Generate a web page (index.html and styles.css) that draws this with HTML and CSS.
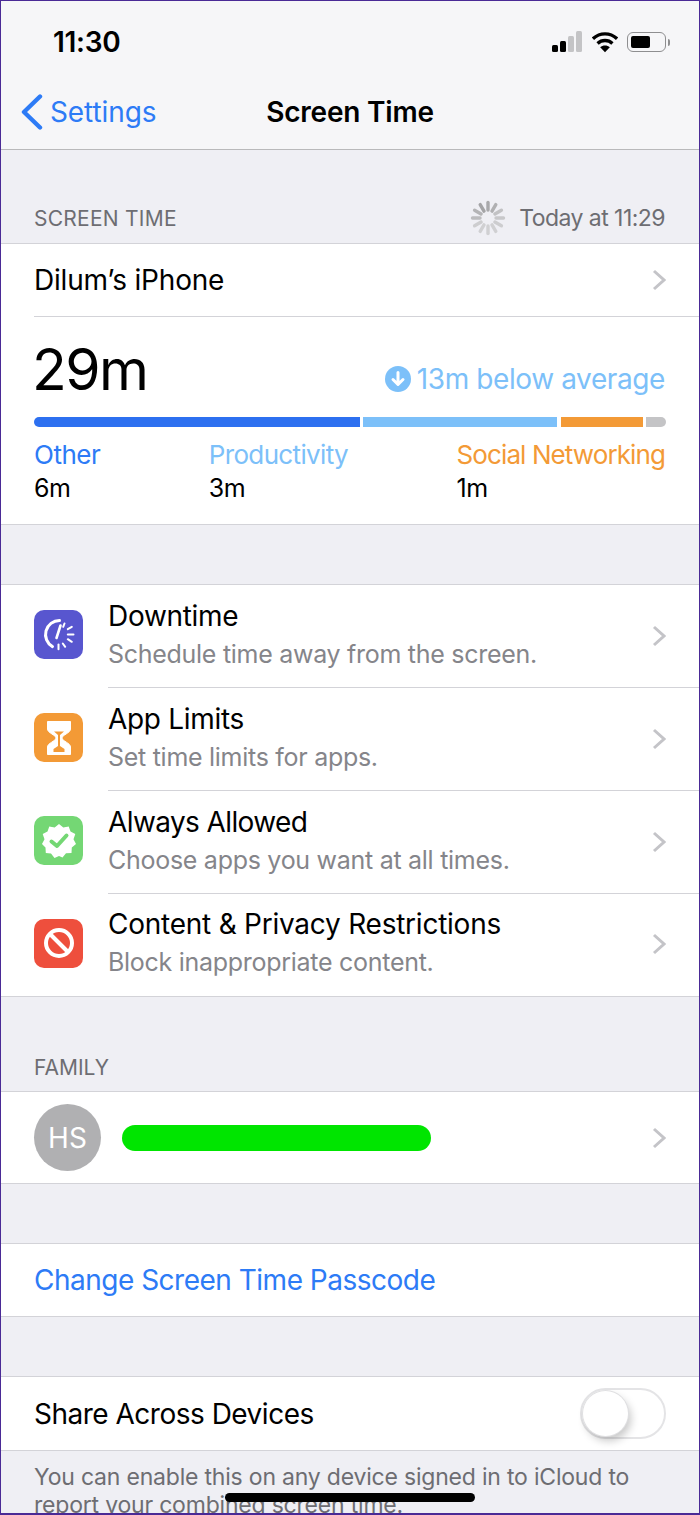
FILE: index.html
```html
<!DOCTYPE html>
<html lang="en">

<head>
    <meta charset="UTF-8">
    <meta name="viewport" content="width=device-width, initial-scale=1.0">
    <title>Screen Time</title>
    <link rel="stylesheet" href="styles.css">
</head>

<body>
    <div id="phone">
        <div id="topBar">
            <div class="statusBar">
                <span class="clock">11:30</span>
                <div class="statusIcons">
                    <svg width="33" height="24" viewBox="0 0 33 24">
                        <rect x="1" y="15" width="6" height="7" rx="1.5" fill="#000"/>
                        <rect x="9" y="11" width="6" height="11" rx="1.5" fill="#000"/>
                        <rect x="17" y="6" width="6" height="16" rx="1.5" fill="#c4c4c6"/>
                        <rect x="25" y="1" width="6" height="21" rx="1.5" fill="#c4c4c6"/>
                    </svg>
                    <svg width="26" height="21" viewBox="1 1.500 28 22">
                        <path d="M2 8.5C9.5 1.5 20.500 1.500 28 8.500" fill="none" stroke="#000" stroke-width="3.600"/>
                        <path d="M7 13.500C11.500 9.300 18.500 9.300 23 13.500" fill="none" stroke="#000" stroke-width="3.600"/>
                        <path d="M15 23L9.800 17.500C12.800 15 17.200 15 20.200 17.500Z" fill="#000"/>
                    </svg>
                    <div class="battery">
                        <div class="batteryBody"><div class="batteryLevel"></div></div>
                        <div class="batteryTip"></div>
                    </div>
                </div>
            </div>
            <div class="navBar">
                <div class="backLink">
                    <svg width="24" height="36" viewBox="0 0 24 36">
                        <path d="M20 2.500L4 18L20 33.500" fill="none" stroke="#2d7bf6" stroke-width="4.400" stroke-linecap="round" stroke-linejoin="round"/>
                    </svg>
                    <span>Settings</span>
                </div>
                <div class="navTitle">Screen Time</div>
            </div>
        </div>

        <div class="sectionHead firstHead">
            <span>SCREEN TIME</span>
            <div class="updated">
                <svg width="36" height="36" viewBox="0 0 36 36">
                    <g stroke-width="3.400" stroke-linecap="round" fill="none">
                        <path d="M18 2.500V10" stroke="#a9a9ab"/>
                        <path d="M25.800 4.600L22 11.100" stroke="#b0b0b2"/>
                        <path d="M31.400 10.200L24.900 14" stroke="#c2c2c4"/>
                        <path d="M33.500 18H26" stroke="#c8c8ca"/>
                        <path d="M31.400 25.800L24.900 22" stroke="#cdcdcf"/>
                        <path d="M25.800 31.400L22 24.900" stroke="#d0d0d2"/>
                        <path d="M18 33.500V26" stroke="#d0d0d2"/>
                        <path d="M10.200 31.400L14 24.900" stroke="#d0d0d2"/>
                        <path d="M4.600 25.800L11.100 22" stroke="#cdcdcf"/>
                        <path d="M2.500 18H10" stroke="#bcbcbe"/>
                        <path d="M4.600 10.200L11.100 14" stroke="#b4b4b6"/>
                        <path d="M10.200 4.600L14 11.100" stroke="#a4a4a6"/>
                    </g>
                </svg>
                <span>Today at 11:29</span>
            </div>
        </div>

        <div class="group">
            <div class="row deviceRow">
                <span class="rowTitle deviceName">Dilum’s iPhone</span>
                <svg class="chevron" width="14" height="22" viewBox="0 0 14 22"><path d="M2 2L12 11L2 20" fill="none" stroke="#c4c4c8" stroke-width="3"/></svg>
            </div>
            <div class="summary">
                <div class="totalLine">
                    <span class="total">29m</span>
                    <div class="average">
                        <svg width="26" height="26" viewBox="0 0 26 26">
                            <circle cx="13" cy="13" r="13" fill="#7cc0f9"/>
                            <path d="M13 6.500V18M8 13.500L13 18.500L18 13.500" fill="none" stroke="#fff" stroke-width="3" stroke-linecap="round" stroke-linejoin="round"/>
                        </svg>
                        <span>13m below average</span>
                    </div>
                </div>
                <div class="usageBar">
                    <div class="seg segOther"></div>
                    <div class="seg segProd"></div>
                    <div class="seg segSocial"></div>
                    <div class="seg segRest"></div>
                </div>
                <div class="legend">
                    <div class="legendItem"><span class="labelOther">Other</span><span class="legendTime">6m</span></div>
                    <div class="legendItem"><span class="labelProd">Productivity</span><span class="legendTime">3m</span></div>
                    <div class="legendItem"><span class="labelSocial">Social Networking</span><span class="legendTime">1m</span></div>
                </div>
            </div>
        </div>

        <div class="spacer"></div>

        <div class="group">
            <div class="featureRow">
                <div class="appIcon iconDowntime">
                    <svg width="34" height="34" viewBox="0 0 34 34">
                        <path d="M17.500 2.500A14 14 0 0 0 10.500 28.600" fill="none" stroke="#fff" stroke-width="3" stroke-linecap="round"/>
                        <path d="M18.500 7.500L14.500 20" stroke="#fff" stroke-width="2.600" stroke-linecap="round"/>
                        <g stroke="#fff" stroke-width="2" stroke-linecap="round">
                            <path d="M22.500 5.500L21.200 8.800"/>
                            <path d="M29.800 8.800L25.800 11.200"/>
                            <path d="M31.500 16.500H25.800"/>
                            <path d="M29.800 23.800L25.800 21.200"/>
                            <path d="M23.200 28.800L20.800 25.500"/>
                            <path d="M16.500 31.200V26.500"/>
                        </g>
                    </svg>
                </div>
                <div class="featureText"><span class="rowTitle">Downtime</span><span class="rowSub">Schedule time away from the screen.</span></div>
                <svg class="chevron" width="14" height="22" viewBox="0 0 14 22"><path d="M2 2L12 11L2 20" fill="none" stroke="#c4c4c8" stroke-width="3"/></svg>
            </div>
            <div class="featureRow">
                <div class="appIcon iconLimits">
                    <svg width="34" height="38" viewBox="0 0 34 38">
                        <path d="M5.500 2.500H28.500V10C28.500 14 20 16 20 19C20 22 28.500 24 28.500 28V35.500H5.500V28C5.500 24 14 22 14 19C14 16 5.500 14 5.500 10Z" fill="#fff" stroke="#fff" stroke-linejoin="round"/>
                        <path d="M12 12.500H22L18 16V27L22.500 30V33H11.500V30L16 27V16Z" fill="#f39a36"/>
                    </svg>
                </div>
                <div class="featureText"><span class="rowTitle">App Limits</span><span class="rowSub">Set time limits for apps.</span></div>
                <svg class="chevron" width="14" height="22" viewBox="0 0 14 22"><path d="M2 2L12 11L2 20" fill="none" stroke="#c4c4c8" stroke-width="3"/></svg>
            </div>
            <div class="featureRow">
                <div class="appIcon iconAllowed">
                    <svg width="36" height="36" viewBox="0 0 36 36">
                        <path d="M18 1L22.300 4.400L27.700 3.400L29.500 8.500L34.300 11L32.500 16.200L35 21L30.800 24.500L30.500 30L25 30.300L21.500 34.500L18 33L13.500 35L10 30.500L4.800 30L4.500 24.500L1 21L3.500 16.200L1.700 11L6.500 8.500L8.300 3.400L13.700 4.400Z" fill="#fff"/>
                        <path d="M10.500 18.500L16 23L25.500 12.500" fill="none" stroke="#74d774" stroke-width="4" stroke-linecap="round" stroke-linejoin="round"/>
                    </svg>
                </div>
                <div class="featureText"><span class="rowTitle titleAllowed">Always Allowed</span><span class="rowSub">Choose apps you want at all times.</span></div>
                <svg class="chevron" width="14" height="22" viewBox="0 0 14 22"><path d="M2 2L12 11L2 20" fill="none" stroke="#c4c4c8" stroke-width="3"/></svg>
            </div>
            <div class="featureRow">
                <div class="appIcon iconContent">
                    <svg width="32" height="32" viewBox="0 0 32 32">
                        <circle cx="16" cy="16" r="13" fill="none" stroke="#fff" stroke-width="4"/>
                        <path d="M7 7L25 25" stroke="#fff" stroke-width="4"/>
                    </svg>
                </div>
                <div class="featureText"><span class="rowTitle titleContent">Content &amp; Privacy Restrictions</span><span class="rowSub">Block inappropriate content.</span></div>
                <svg class="chevron" width="14" height="22" viewBox="0 0 14 22"><path d="M2 2L12 11L2 20" fill="none" stroke="#c4c4c8" stroke-width="3"/></svg>
            </div>
        </div>

        <div class="sectionHead familyHead"><span>FAMILY</span></div>

        <div class="group">
            <div class="row familyRow">
                <div class="avatar">HS</div>
                <div class="hiddenName"></div>
                <svg class="chevron" width="14" height="22" viewBox="0 0 14 22"><path d="M2 2L12 11L2 20" fill="none" stroke="#c4c4c8" stroke-width="3"/></svg>
            </div>
        </div>

        <div class="spacer"></div>

        <div class="group">
            <div class="row"><span class="rowTitle linkText">Change Screen Time Passcode</span></div>
        </div>

        <div class="spacer"></div>

        <div class="group">
            <div class="row shareRow">
                <span class="rowTitle shareText">Share Across Devices</span>
                <div class="toggle"><div class="knob"></div></div>
            </div>
        </div>

        <p class="footNote">You can enable this on any device signed in to iCloud to report your combined screen time.</p>

        <div class="homeBar"></div>
    </div>
</body>

</html>
```

FILE: styles.css
```css
html, body {
    margin: 0;
    padding: 0;
}

body {
    font-family: Inter, "Liberation Sans", sans-serif;
    color: #000;
    background: #efeff4;
}

#phone {
    position: relative;
    box-sizing: border-box;
    width: 700px;
    height: 1515px;
    overflow: hidden;
    border: 1px solid #4a2a96;
    border-bottom-width: 2px;
    background: #efeff4;
}

#topBar {
    height: 148px;
    background: #f6f6f8;
    border-bottom: 1px solid #b9b9bb;
}

.statusBar {
    display: flex;
    justify-content: space-between;
    align-items: center;
    box-sizing: border-box;
    height: 74px;
    padding: 8px 29px 0 52px;
}

.clock {
    font-size: 28px;
    font-weight: 600;
    letter-spacing: -0.3px;
}

.statusIcons {
    display: flex;
    align-items: center;
    gap: 8px;
}

.battery {
    display: flex;
    align-items: center;
    margin-left: 1px;
}

.batteryBody {
    box-sizing: border-box;
    width: 39px;
    height: 20px;
    padding: 3px;
    border: 1.500px solid #8e8e90;
    border-radius: 6px;
}

.batteryLevel {
    width: 19px;
    height: 100%;
    background: #000;
    border-radius: 2px;
}

.batteryTip {
    width: 2px;
    height: 7px;
    margin-left: 2px;
    background: #8e8e90;
    border-radius: 0 2px 2px 0;
}

.navBar {
    position: relative;
    display: flex;
    align-items: center;
    justify-content: center;
    height: 74px;
}

.backLink {
    position: absolute;
    left: 19px;
    top: 0;
    bottom: 0;
    display: flex;
    align-items: center;
    gap: 6px;
    color: #2d7bf6;
    font-size: 28px;
    letter-spacing: -0.1px;
}

.navTitle {
    font-size: 28px;
    font-weight: 600;
    letter-spacing: -0.2px;
}

.sectionHead {
    display: flex;
    justify-content: space-between;
    align-items: center;
    padding: 0 33px;
    color: #6d6d72;
    font-size: 21px;
    letter-spacing: 0.25px;
}

.firstHead {
    height: 93px;
    padding-top: 43px;
    box-sizing: border-box;
}

.familyHead {
    height: 94px;
    padding-top: 46px;
    box-sizing: border-box;
    letter-spacing: 0;
}

.updated {
    display: flex;
    align-items: center;
    gap: 13px;
    margin-right: 1px;
    font-size: 23px;
    letter-spacing: -0.55px;
}

.group {
    background: #fff;
    border-top: 1px solid #d3d3d8;
    border-bottom: 1px solid #d3d3d8;
}

.row {
    display: flex;
    align-items: center;
    justify-content: space-between;
    box-sizing: border-box;
    height: 72px;
    padding: 0 33px;
}

.rowTitle {
    font-size: 28px;
    letter-spacing: -0.3px;
}

.deviceName {
    letter-spacing: -0.2px;
}

.titleAllowed {
    letter-spacing: -0.6px;
}

.titleContent {
    letter-spacing: -0.24px;
}

.linkText {
    color: #2d7bf6;
    letter-spacing: -0.5px;
}

.shareRow {
    height: 73px;
}

.shareText {
    letter-spacing: -0.5px;
}

.chevron {
    flex-shrink: 0;
}

.summary {
    margin-left: 33px;
    padding: 0 33px 0 0;
    height: 208px;
    box-sizing: border-box;
    border-top: 1px solid #d3d3d8;
}

.totalLine {
    display: flex;
    justify-content: space-between;
    align-items: center;
    height: 100px;
}

.total {
    margin-left: -2px;
    padding-top: 4px;
    font-size: 57px;
    letter-spacing: -1.500px;
}

.average {
    display: flex;
    align-items: center;
    gap: 6px;
    margin-right: 1px;
    padding-top: 24px;
    color: #7cc0f9;
    font-size: 28px;
    letter-spacing: -0.4px;
}

.usageBar {
    display: flex;
    gap: 3px;
    height: 10px;
}

.seg {
    height: 100%;
}

.segOther {
    width: 326px;
    background: #2d70f0;
    border-radius: 5px 0 0 5px;
}

.segProd {
    width: 194px;
    background: #7cc0f9;
}

.segSocial {
    width: 82px;
    margin-left: 1px;
    background: #f39a36;
}

.segRest {
    flex: 1;
    background: #c4c4c6;
    border-radius: 0 5px 5px 0;
}

.legend {
    display: flex;
    justify-content: space-between;
    margin-top: 12px;
    padding-right: 1px;
}

.legendItem {
    display: flex;
    flex-direction: column;
    gap: 3px;
    font-size: 26px;
    letter-spacing: -0.5px;
}

.legendTime {
    font-size: 25px;
    color: #000;
}

.labelOther {
    color: #2d7bf6;
}

.labelProd {
    color: #7cc0f9;
    letter-spacing: -0.65px;
}

.labelSocial {
    color: #f39a36;
    letter-spacing: -0.9px;
}

.spacer {
    height: 59px;
}

/* hairline starts under the text, not under the icon */
.featureRow {
    display: flex;
    align-items: center;
    box-sizing: border-box;
    height: 103px;
    padding: 0 33px;
    background: linear-gradient(#d3d3d8, #d3d3d8) 107px 100% / 100% 1px no-repeat;
}

.featureRow:last-child {
    height: 102px;
    background: none;
}

.featureRow .chevron {
    margin-bottom: 2px;
}

.appIcon {
    display: flex;
    align-items: center;
    justify-content: center;
    flex-shrink: 0;
    width: 49px;
    height: 49px;
    margin-bottom: 4px;
    border-radius: 10px;
}

.iconDowntime {
    background: #5856cf;
}

.iconLimits {
    background: #f39a36;
}

.iconAllowed {
    background: #74d774;
}

.iconContent {
    background: #ee4f3d;
}

.featureText {
    display: flex;
    flex-direction: column;
    gap: 6px;
    flex: 1;
    margin-left: 25px;
    padding-bottom: 6px;
}

.rowSub {
    font-size: 25px;
    color: #85858a;
    letter-spacing: -0.28px;
}

.familyRow {
    height: 91px;
}

.avatar {
    display: flex;
    align-items: center;
    justify-content: center;
    flex-shrink: 0;
    width: 67px;
    height: 67px;
    border-radius: 50%;
    background: #b0b0b2;
    color: #fff;
    font-size: 28px;
}

.hiddenName {
    flex: none;
    width: 309px;
    height: 26px;
    margin-left: 21px;
    margin-right: auto;
    background: #00e500;
    border-radius: 13px;
}

.toggle {
    box-sizing: border-box;
    width: 86px;
    height: 51px;
    padding: 1px;
    border: 2px solid #e4e4e6;
    border-radius: 26px;
    background: #fff;
}

.knob {
    width: 45px;
    height: 45px;
    border-radius: 50%;
    background: #fff;
    box-shadow: 0 0 0 1px #e0e0e2, 3px 5px 9px rgba(0, 0, 0, 0.22);
}

.footNote {
    margin: 12px 33px 0;
    font-size: 23px;
    line-height: 28px;
    color: #6d6d72;
    letter-spacing: -0.2px;
}

.homeBar {
    position: absolute;
    left: 224px;
    bottom: 11px;
    width: 250px;
    height: 9px;
    background: #000;
    border-radius: 5px;
}
```
